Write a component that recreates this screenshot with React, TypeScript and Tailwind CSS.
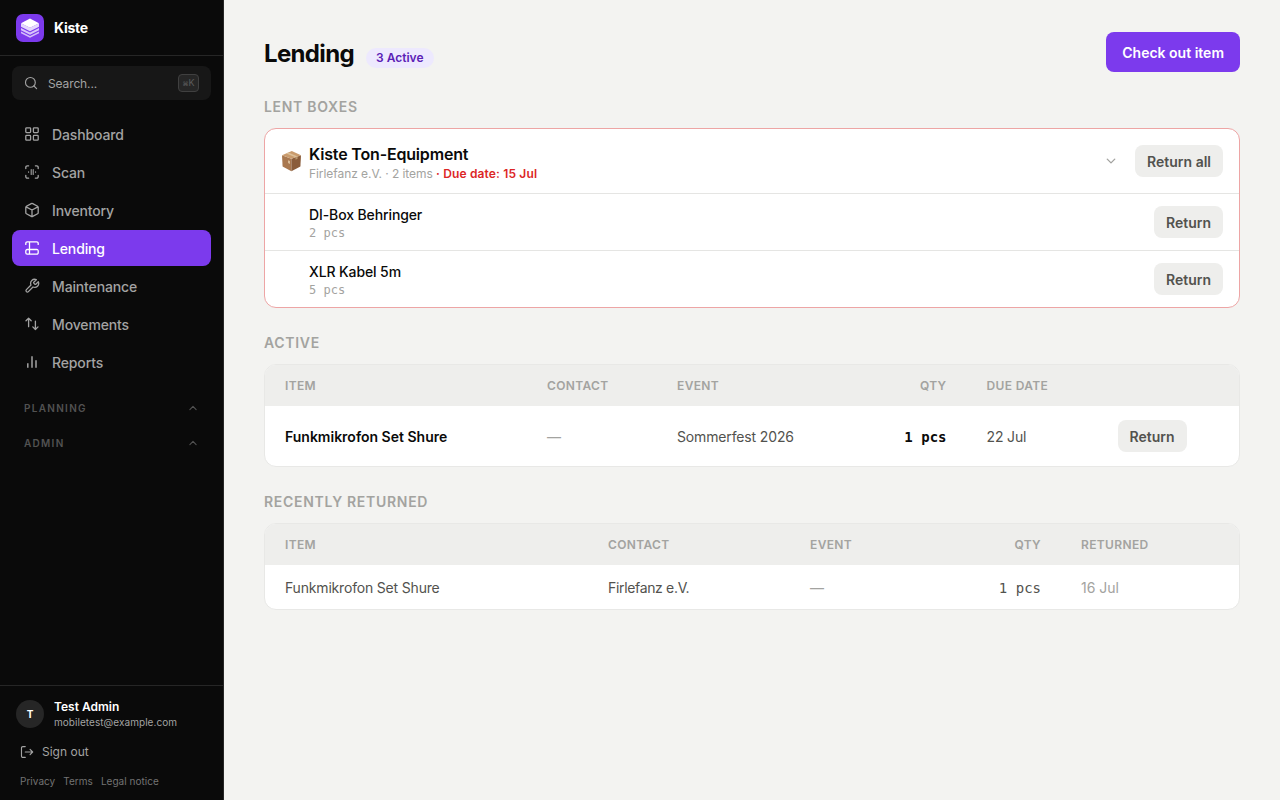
import React from "react";

interface NavItem {
  label: string;
  icon: React.ReactNode;
  active?: boolean;
}

interface Column {
  label: string;
  width: string;
  right?: boolean;
}

const Icon: React.FC<{ size?: number; children: React.ReactNode }> = ({ size = 16, children }) => (
  <svg
    width={size}
    height={size}
    viewBox="0 0 16 16"
    fill="none"
    stroke="currentColor"
    strokeWidth="1.3"
    strokeLinecap="round"
    strokeLinejoin="round"
    className="shrink-0"
  >
    {children}
  </svg>
);

const navItems: NavItem[] = [
  {
    label: "Dashboard",
    icon: (
      <Icon>
        <rect x="1.8" y="1.8" width="4.8" height="4.8" rx="0.8" />
        <rect x="9.4" y="1.8" width="4.8" height="4.8" rx="0.8" />
        <rect x="1.8" y="9.4" width="4.8" height="4.8" rx="0.8" />
        <rect x="9.4" y="9.4" width="4.8" height="4.8" rx="0.8" />
      </Icon>
    ),
  },
  {
    label: "Scan",
    icon: (
      <Icon>
        <path d="M1.8 4.6V3.3a1.5 1.5 0 0 1 1.5-1.5h1.3M11.4 1.8h1.3a1.5 1.5 0 0 1 1.5 1.5v1.3M14.2 11.4v1.3a1.5 1.5 0 0 1-1.5 1.5h-1.3M4.6 14.2H3.3a1.5 1.5 0 0 1-1.5-1.5v-1.3" />
        <path d="M4.6 7.7v.6M7.2 5.6v4.8M9.2 5.6v4.8M11.6 7.7v.6" strokeWidth="1.1" />
      </Icon>
    ),
  },
  {
    label: "Inventory",
    icon: (
      <Icon>
        <path d="M7.3 1.6a1.5 1.5 0 0 1 1.4 0l4.9 2.7a1.2 1.2 0 0 1 .6 1v5.4a1.2 1.2 0 0 1-.6 1l-4.9 2.7a1.5 1.5 0 0 1-1.4 0l-4.9-2.7a1.2 1.2 0 0 1-.6-1V5.3a1.2 1.2 0 0 1 .6-1zM2.1 4.9 8 8l5.9-3.1M8 8v6.5" />
      </Icon>
    ),
  },
  {
    label: "Lending",
    active: true,
    icon: (
      <Icon>
        <path d="M1.8 4.4V3.3a1.5 1.5 0 0 1 1.5-1.5h9.4a1.5 1.5 0 0 1 1.5 1.5v1.1M5.5 1.8v12.4M3.2 9.5h9.6a1.4 1.4 0 0 1 1.4 1.4v1.9a1.4 1.4 0 0 1-1.4 1.4H3.2a1.4 1.4 0 0 1-1.4-1.4v-1.9a1.4 1.4 0 0 1 1.4-1.4" />
      </Icon>
    ),
  },
  {
    label: "Maintenance",
    icon: (
      <Icon>
        <path d="M9.8 4.2a.7.7 0 0 0 0 .95l1.05 1.05a.7.7 0 0 0 .95 0l2.5-2.5a4 4 0 0 1-5.3 5.3l-4.6 4.6a1.4 1.4 0 0 1-2-2L7 7a4 4 0 0 1 5.3-5.3z" />
      </Icon>
    ),
  },
  {
    label: "Movements",
    icon: (
      <Icon>
        <path d="M4.6 10.7V2.2M2 4.8l2.6-2.6 2.6 2.6M11.4 5.2v8.3M8.8 10.9l2.6 2.6 2.6-2.6" />
      </Icon>
    ),
  },
  {
    label: "Reports",
    icon: (
      <Icon>
        <path d="M3.8 9.2v4.5M8 2.2v11.5M12 6.2v7.5" strokeLinecap="butt" strokeWidth="1.5" />
      </Icon>
    ),
  },
];

const activeColumns: Column[] = [
  { label: "Item", width: "w-[262px]" },
  { label: "Contact", width: "w-[130px]" },
  { label: "Event", width: "w-[200px]" },
  { label: "Qty", width: "w-[109.5px]", right: true },
  { label: "Due date", width: "w-[131px]" },
  { label: "", width: "w-[141.5px]" },
];

const returnedColumns: Column[] = [
  { label: "Item", width: "w-[323px]" },
  { label: "Contact", width: "w-[202px]" },
  { label: "Event", width: "w-[150px]" },
  { label: "Qty", width: "w-[121px]", right: true },
  { label: "Returned", width: "w-[178px]" },
];

const boxItems = [
  { name: "DI-Box Behringer", qty: "2 pcs" },
  { name: "XLR Kabel 5m", qty: "5 pcs" },
];

const Logo = () => (
  <svg width="28" height="28" viewBox="0 0 28 28">
    <rect width="28" height="28" rx="7" fill="#7c3aed" />
    <path d="M5 17.6v1.7l9 4.5 9-4.5v-1.7l-9 4.5z" fill="#d3bdfa" />
    <path d="M5 13.9v2.4l9 4.5 9-4.5v-2.4l-9 4.5z" fill="#d9c6fb" />
    <path d="M5 9.2v3.5l9 4.5 9-4.5V9.2l-9 4.6z" fill="#e4d7fd" />
    <path d="m14 4.6 9 4.6-9 4.6-9-4.6z" fill="#fff" />
  </svg>
);

const BoxIcon = () => (
  <svg width="21" height="22" viewBox="0 0 21 22" className="shrink-0">
    <path d="m1 5.2 9.4 3.6v12.4L1.6 16.6z" fill="#a9784f" />
    <path d="m20 5.2-9.6 3.6v12.4l9-4.6z" fill="#8a5c3a" />
    <path d="M1 5.2 10.8 1 20 5.2l-9.6 3.6z" fill="#c99b6d" />
    <path d="m5.2 3.4 2-.8 9.4 3.8-2.1.9z" fill="#dcc09a" />
    <path d="m14.5 7.3 2.1-.9v2.4l-2.1 1z" fill="#b8946a" />
    <path d="m7 10.2 2 .8v3l-2-.9z" fill="#d9bb97" />
  </svg>
);

const Chevron: React.FC<{ up?: boolean; size: number }> = ({ up, size }) => (
  <Icon size={size}>
    <path d={up ? "M3 10.5 8 5.5l5 5" : "M3 5.5l5 5 5-5"} strokeWidth="1.8" />
  </Icon>
);

const ReturnButton: React.FC<{ label?: string }> = ({ label = "Return" }) => (
  <button className="h-8 rounded-lg bg-[#eeeeec] px-3 pt-0.5 text-sm leading-5 font-semibold text-[#52524e]">
    {label}
  </button>
);

const SectionTitle: React.FC<{ children: React.ReactNode }> = ({ children }) => (
  <h2 className="mt-[25px] mb-[11px] text-sm leading-5 font-semibold tracking-[0.05em] text-[#a3a3a0] uppercase">
    {children}
  </h2>
);

const TableHead: React.FC<{ columns: Column[] }> = ({ columns }) => (
  <thead>
    <tr className="h-[41px] bg-[#eeeeec]">
      {columns.map((col, i) => (
        <th
          key={i}
          className={`${col.width} px-5 text-xs font-semibold tracking-[0.03em] text-[#a3a3a0] uppercase ${
            col.right ? "text-right" : "text-left"
          }`}
        >
          {col.label}
        </th>
      ))}
    </tr>
  </thead>
);

const Sidebar = () => (
  <aside className="flex w-56 shrink-0 flex-col border-r border-[#262626] bg-[#0a0a0a]">
    <div className="flex h-14 items-center gap-2.5 border-b border-[#262626] px-4">
      <Logo />
      <span className="text-sm font-bold tracking-[-0.02em] text-white">Kiste</span>
    </div>

    {/* Search */}
    <div className="px-3 pt-2.5">
      <button className="flex h-[34px] w-full items-center rounded-lg bg-[#171717] px-3 text-[#a3a3a3]">
        <Icon size={14}>
          <circle cx="7.3" cy="7.3" r="5.6" />
          <path d="m11.4 11.4 3 3" />
        </Icon>
        <span className="ml-2.5 pt-px text-xs tracking-[-0.01em]">Search...</span>
        <kbd className="ml-auto flex h-[18px] w-[21px] items-center justify-center rounded border border-[#404040] bg-[#262626] font-[Inter] text-[9px] text-[#5c5c5c]">
          <span className="text-[6px]">⌘</span>K
        </kbd>
      </button>
    </div>

    <nav className="flex flex-col gap-0.5 px-3 pt-4">
      {navItems.map((item) => (
        <a
          key={item.label}
          className={`flex h-9 items-center gap-3 rounded-lg px-3 text-sm font-medium tracking-[-0.01em] ${
            item.active ? "bg-[#7c3aed] text-white" : "text-[#a3a3a3]"
          }`}
        >
          {item.icon}
          <span className="pt-0.5">{item.label}</span>
        </a>
      ))}
    </nav>

    {/* Collapsed groups */}
    <div className="flex flex-col gap-5 px-6 pt-5 text-[#525252]">
      {["Planning", "Admin"].map((group) => (
        <div key={group} className="flex h-[15px] items-center justify-between pr-[1px]">
          <span className="pt-0.5 text-[10px] font-semibold tracking-[0.13em] uppercase">{group}</span>
          <Chevron up size={10} />
        </div>
      ))}
    </div>

    <div className="mt-auto h-[115px] border-t border-[#262626] px-4 pt-3">
      <div className="flex h-8 items-center gap-2.5">
        <div className="flex h-7 w-7 items-center justify-center rounded-full bg-[#262626] text-[10px] font-bold text-white">
          T
        </div>
        <div className="pb-0.5">
          <p className="text-xs leading-[18px] font-semibold text-white">Test Admin</p>
          <p className="-mt-px text-[10px] leading-[14px] tracking-[0.005em] text-[#a3a3a3]">mobiletest@example.com</p>
        </div>
      </div>
      <button className="mt-3 flex h-5 items-center gap-2 pl-1 text-xs text-[#a3a3a3]">
        <Icon size={14}>
          <path d="M6 14.2H3.2a1.5 1.5 0 0 1-1.5-1.5V3.3a1.5 1.5 0 0 1 1.5-1.5H6M6 8h8.5M11.5 5l3 3-3 3" />
        </Icon>
        Sign out
      </button>
      <div className="mt-3 flex gap-2 pl-1 text-[10px] leading-[15px] tracking-[0.003em] text-[#737373]">
        <a>Privacy</a>
        <a>Terms</a>
        <a>Legal notice</a>
      </div>
    </div>
  </aside>
);

export default function App() {
  return (
    <div className="flex h-screen overflow-hidden bg-[#f3f3f1] font-[Inter,sans-serif] text-[#0a0a0a]">
      <Sidebar />

      <main className="min-w-0 flex-1 px-10 pt-8">
        <header className="flex h-10 items-center justify-between">
          <div className="flex items-baseline gap-3 pt-[3px]">
            <h1 className="text-2xl font-bold tracking-[-0.027em]">Lending</h1>
            <span className="rounded-full bg-[#ede9fe] px-2.5 py-0.5 text-xs font-semibold text-[#5b21b6]">
              3 Active
            </span>
          </div>
          <button className="h-10 rounded-lg bg-[#7c3aed] px-4 pt-0.5 text-sm font-semibold text-white">
            Check out item
          </button>
        </header>

        <SectionTitle>Lent boxes</SectionTitle>
        <section className="overflow-hidden rounded-xl border border-[#eda5a5] bg-white">
          <div className="flex h-16 items-center px-4">
            <BoxIcon />
            <div className="ml-[7px] pt-[5px]">
              <p className="leading-5 font-semibold tracking-[-0.011em]">Kiste Ton-Equipment</p>
              <p className="mt-px text-xs leading-[18px] tracking-[-0.005em] text-[#a3a3a0]">
                Firlefanz e.V. · 2 items{" "}
                <span className="font-semibold tracking-[0.012em] text-[#dc2626]">· Due date: 15 Jul</span>
              </p>
            </div>
            <span className="mr-[18px] ml-auto text-[#a3a3a0]">
              <Chevron size={12} />
            </span>
            <ReturnButton label="Return all" />
          </div>
          {boxItems.map((item) => (
            <div
              key={item.name}
              className="flex h-[57px] items-center justify-between border-t border-[#e5e5e3] pr-4 pl-11"
            >
              <div className="pt-0.5">
                <p className="text-sm leading-5 font-medium tracking-[-0.008em]">{item.name}</p>
                <p className="font-['DejaVu_Sans_Mono',monospace] text-xs leading-4 text-[#a3a3a0]">{item.qty}</p>
              </div>
              <ReturnButton />
            </div>
          ))}
        </section>

        <SectionTitle>Active</SectionTitle>
        <section className="overflow-hidden rounded-xl border border-[#e8e8e6] bg-white">
          <table className="w-full table-fixed text-sm text-[#52524e]">
            <TableHead columns={activeColumns} />
            <tbody>
              <tr className="h-[60px]">
                <td className="px-5 pt-0.5 font-semibold text-[#0a0a0a]">Funkmikrofon Set Shure</td>
                <td className="px-5 pt-0.5 tracking-[-0.01em] text-[#a3a3a0]">—</td>
                <td className="px-5 pt-0.5 tracking-[-0.01em]">Sommerfest 2026</td>
                <td className="px-5 pt-0.5 text-right font-['DejaVu_Sans_Mono',monospace] font-bold text-[#0a0a0a]">
                  1 pcs
                </td>
                <td className="px-5 pt-0.5 tracking-[-0.01em]">22 Jul</td>
                <td className="px-5">
                  <ReturnButton />
                </td>
              </tr>
            </tbody>
          </table>
        </section>

        <SectionTitle>Recently returned</SectionTitle>
        <section className="overflow-hidden rounded-xl border border-[#e8e8e6] bg-white">
          <table className="w-full table-fixed text-sm text-[#52524e]">
            <TableHead columns={returnedColumns} />
            <tbody>
              <tr className="h-11">
                <td className="px-5 pt-0.5 tracking-[-0.013em]">Funkmikrofon Set Shure</td>
                <td className="px-5 pt-0.5 tracking-[-0.024em]">Firlefanz e.V.</td>
                <td className="px-5 pt-0.5 text-[#a3a3a0]">—</td>
                <td className="px-5 pt-0.5 text-right font-['DejaVu_Sans_Mono',monospace]">1 pcs</td>
                <td className="px-5 pt-0.5 text-[#a3a3a0]">16 Jul</td>
              </tr>
            </tbody>
          </table>
        </section>
      </main>
    </div>
  );
}
